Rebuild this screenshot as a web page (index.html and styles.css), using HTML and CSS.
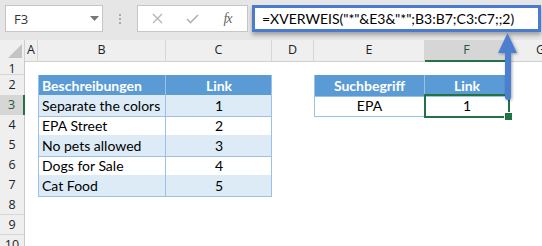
FILE: index.html
```html
<!DOCTYPE html>
<html lang="de">

<head>
    <meta charset="UTF-8">
    <meta name="viewport" content="width=device-width, initial-scale=1.0">
    <link rel="stylesheet" href="styles.css">
    <title>XVERWEIS</title>
</head>

<body>
    <div class="topbar">
        <div class="namebox">
            <span>F3</span>
            <svg width="9" height="5" viewBox="0 0 9 5"><path d="M0 0H9L4.5 5Z" fill="#777" /></svg>
        </div>
        <div class="grip"><i></i><i></i><i></i></div>
        <div class="fbuttons">
            <svg width="11" height="11" viewBox="0 0 11 11"><path d="M1 1L10 10M10 1L1 10" stroke="#b3b3b3" stroke-width="1.3" fill="none" /></svg>
            <svg width="13" height="10" viewBox="0 0 13 10"><path d="M1 5L4.5 8.5L12 1" stroke="#b3b3b3" stroke-width="1.6" fill="none" /></svg>
            <span class="fx">fx</span>
        </div>
        <div class="formula">=XVERWEIS("*"&amp;E3&amp;"*";B3:B7;C3:C7;;2)</div>
    </div>

    <div class="sheet">
        <div class="row colhead">
            <div class="corner"><svg width="14" height="14" viewBox="0 0 14 14"><path d="M14 0V14H0Z" fill="#c4c4c4" /></svg></div>
            <div class="ch">A</div>
            <div class="ch">B</div>
            <div class="ch">C</div>
            <div class="ch">D</div>
            <div class="ch">E</div>
            <div class="ch active">F</div>
            <div class="ch g">G</div>
        </div>
        <div class="row short">
            <div class="rh">1</div>
            <div></div><div></div><div></div><div></div><div></div><div></div><div></div>
        </div>
        <div class="row">
            <div class="rh">2</div>
            <div></div>
            <div class="tc hd first l">Beschreibungen</div>
            <div class="tc hd c">Link</div>
            <div></div>
            <div class="tc hd first c">Suchbegriff</div>
            <div class="tc hd c">Link</div>
            <div></div>
        </div>
        <div class="row">
            <div class="rh active">3</div>
            <div></div>
            <div class="tc band first l">Separate the colors</div>
            <div class="tc band c">1</div>
            <div></div>
            <div class="tc first c">EPA</div>
            <div class="tc c sel">1</div>
            <div></div>
        </div>
        <div class="row">
            <div class="rh">4</div>
            <div></div>
            <div class="tc first l">EPA Street</div>
            <div class="tc c">2</div>
            <div></div><div></div><div></div><div></div>
        </div>
        <div class="row">
            <div class="rh">5</div>
            <div></div>
            <div class="tc band first l">No pets allowed</div>
            <div class="tc band c">3</div>
            <div></div><div></div><div></div><div></div>
        </div>
        <div class="row">
            <div class="rh">6</div>
            <div></div>
            <div class="tc first l">Dogs for Sale</div>
            <div class="tc c">4</div>
            <div></div><div></div><div></div><div></div>
        </div>
        <div class="row">
            <div class="rh">7</div>
            <div></div>
            <div class="tc band first l">Cat Food</div>
            <div class="tc band c">5</div>
            <div></div><div></div><div></div><div></div>
        </div>
        <div class="row">
            <div class="rh">8</div>
            <div></div><div></div><div></div><div></div><div></div><div></div><div></div>
        </div>
        <div class="row">
            <div class="rh">9</div>
            <div></div><div></div><div></div><div></div><div></div><div></div><div></div>
        </div>
        <div class="row">
            <div class="rh">10</div>
            <div></div><div></div><div></div><div></div><div></div><div></div><div></div>
        </div>
    </div>

    <!-- pointer from the selected cell up to the formula bar -->
    <svg class="arrow" width="30" height="96" viewBox="0 0 30 96">
        <defs>
            <filter id="sh" x="-50%" y="-20%" width="200%" height="140%">
                <feDropShadow dx="1" dy="1" stdDeviation="1.5" flood-color="#000" flood-opacity="0.35" />
            </filter>
        </defs>
        <g filter="url(#sh)" fill="#4e7fd1">
            <rect x="12" y="18" width="6" height="52" rx="3" />
            <path d="M5 23L14.5 3L24 23Z" />
        </g>
    </svg>
</body>

</html>
```

FILE: styles.css
```css
* {
    margin: 0;
    padding: 0;
    box-sizing: border-box;
}

body {
    position: relative;
    width: 542px;
    height: 246px;
    overflow: hidden;
    background-color: #fff;
    font-family: Lato, "Liberation Sans", sans-serif;
    color: #000;
}

/* formula bar */
.topbar {
    display: flex;
    align-items: flex-start;
    height: 40px;
    padding: 5px 1px 0 5px;
    background-color: #e6e6e6;
}

.namebox {
    display: flex;
    align-items: center;
    justify-content: space-between;
    width: 98px;
    height: 27px;
    padding: 0 3px 0 8px;
    background-color: #fff;
    border: 1px solid #c6c6c6;
    font-family: "Open Sans", sans-serif;
    font-size: 13px;
    color: #333;
}

.grip {
    display: flex;
    flex-direction: column;
    align-items: center;
    justify-content: center;
    gap: 2px;
    width: 34px;
    height: 27px;
}

.grip i {
    width: 2px;
    height: 2px;
    background-color: #a9a9a9;
}

.fbuttons {
    display: grid;
    grid-template-columns: repeat(3, 35px);
    justify-items: center;
    align-items: center;
    width: 111px;
    height: 27px;
    padding-left: 2px;
    background-color: #fff;
    border: 1px solid #c6c6c6;
}

.fx {
    font-family: "Liberation Serif", serif;
    font-style: italic;
    font-size: 14px;
    color: #666;
    letter-spacing: -1px;
}

.formula {
    flex: 1;
    display: flex;
    align-items: center;
    height: 27px;
    margin-left: 4px;
    padding-left: 7px;
    background-color: #fff;
    border: 3px solid #4a7bcf;
    box-shadow: 0 3px 4px rgba(0, 0, 0, 0.3);
    font-size: 14px;
    white-space: nowrap;
}

/* grid */
.row {
    display: grid;
    grid-template-columns: 25px 13px 128px 106px 42px 111px 84px 1fr;
    height: 20px;
}

.row.short {
    height: 14px;
}

.colhead {
    height: 21px;
    background-color: #efefef;
}

.corner {
    display: flex;
    align-items: flex-end;
    justify-content: flex-end;
    padding: 0 2px 3px 0;
    border-right: 1px solid #d0d0d0;
    border-bottom: 1px solid #d0d0d0;
}

.ch {
    border-right: 1px solid #d6d6d6;
    border-bottom: 1px solid #d0d0d0;
    text-align: center;
    line-height: 20px;
    font-family: "Open Sans", sans-serif;
    font-size: 12.5px;
    color: #222;
}

.ch.active {
    background-color: #d6d6d6;
    border-bottom: 2px solid #217346;
    color: #1d5c3a;
}

.ch.g {
    text-align: left;
    padding-left: 27px;
    border-right: none;
}

.rh {
    background-color: #efefef;
    border-right: 1px solid #c8c8c8;
    border-bottom: 1px solid #d6d6d6;
    text-align: center;
    font-family: "Open Sans", sans-serif;
    font-size: 12.5px;
    line-height: 19px;
    color: #222;
}

.short .rh {
    line-height: 16px;
    overflow: hidden;
}

.rh.active {
    background-color: #d6d6d6;
    border-right: 2px solid #217346;
    color: #1d5c3a;
}

/* tables */
.tc {
    font-size: 14px;
    line-height: 22px;
    white-space: nowrap;
    box-shadow: inset -1px -1px 0 #9bc2e6;
}

.tc.first {
    box-shadow: inset 1px 0 0 #9bc2e6, inset -1px -1px 0 #9bc2e6;
}

.hd {
    background-color: #5b9bd5;
    color: #fff;
    font-weight: bold;
}

.band {
    background-color: #ddebf7;
}

.l {
    padding-left: 4px;
}

.c {
    text-align: center;
}

.sel {
    position: relative;
}

.sel::before {
    content: "";
    position: absolute;
    left: -1px;
    top: -1px;
    right: -1px;
    bottom: -1px;
    border: 2px solid #217346;
}

.sel::after {
    content: "";
    position: absolute;
    right: -4px;
    bottom: -4px;
    width: 7px;
    height: 7px;
    background-color: #217346;
    border: 1px solid #fff;
}

.arrow {
    position: absolute;
    left: 493px;
    top: 30px;
}
```
